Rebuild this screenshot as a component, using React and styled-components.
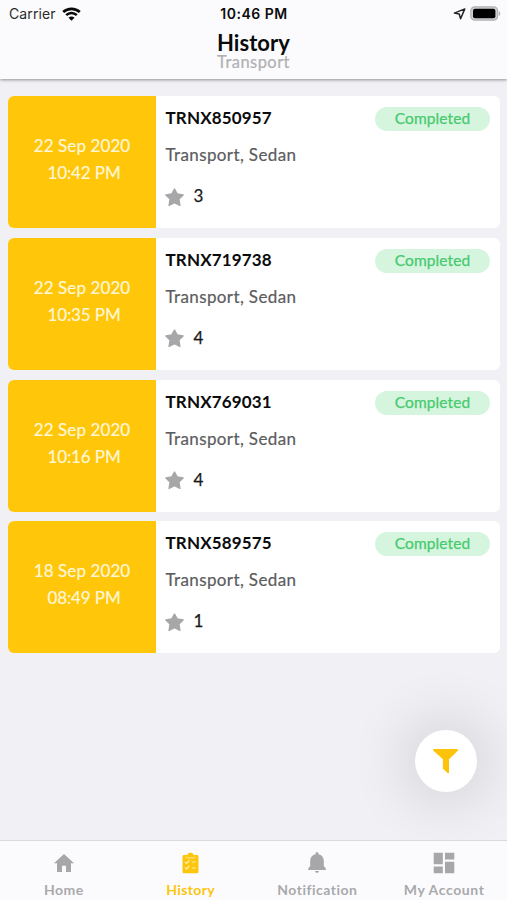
import React from "react";
import styled, { createGlobalStyle } from "styled-components";

const GlobalStyle = createGlobalStyle`
  *, *::before, *::after { box-sizing: border-box; }
  body { margin: 0; background: #f0f0f5; }
`;

const Screen = styled.div`
  position: relative;
  display: flex;
  flex-direction: column;
  width: 507px;
  height: 900px;
  overflow: hidden;
  background: #f0f0f5;
  font-family: Lato, "Open Sans", sans-serif;
  color: #0b0b0c;
  white-space: nowrap;
`;

const Header = styled.header`
  flex: none;
  height: 79px;
  background: #fbfbfd;
  box-shadow: 0 1px 3px rgba(0, 0, 0, 0.4);
`;

const StatusBar = styled.div`
  display: grid;
  grid-template-columns: 1fr auto 1fr;
  align-items: center;
  height: 27px;
  padding: 0 6px 0 9px;
  font-family: Inter, sans-serif;
  font-size: 14px;
  line-height: 27px;
`;

const Carrier = styled.div`
  display: flex;
  align-items: center;
  gap: 6px;
  color: #2a2a2c;
  letter-spacing: 0.12px;
`;

const Clock = styled.div`
  margin: 0 1px 0 -1px;
  font-weight: 600;
  letter-spacing: 0.5px;
`;

const StatusIcons = styled.div`
  display: flex;
  align-items: center;
  justify-content: flex-end;
  gap: 4px;
`;

const Title = styled.h1`
  margin: 6px 0 0;
  text-align: center;
  font-size: 22px;
  font-weight: 700;
  line-height: 20px;
  letter-spacing: 0.05px;
`;

const Subtitle = styled.p`
  margin: 0;
  text-align: center;
  font-size: 16.5px;
  line-height: 18px;
  letter-spacing: 0.45px;
  color: #b0b0b3;
  -webkit-text-stroke: 0.2px currentColor;
`;

const List = styled.main`
  flex: 1;
  display: flex;
  flex-direction: column;
  gap: 9.75px;
  padding: 17px 7px 0 8px;
`;

const Card = styled.article`
  flex: none;
  display: flex;
  height: 132px;
  border-radius: 6px;
  overflow: hidden;
  background: #fff;
`;

const DatePanel = styled.div`
  flex: none;
  display: flex;
  flex-direction: column;
  align-items: center;
  width: 148px;
  padding-top: 36px;
  background: #ffc60a;
  color: #fff7d8;
  font-size: 17px;
  line-height: 27px;
  -webkit-text-stroke: 0.2px currentColor;
`;

const DateLine = styled.span`
  letter-spacing: 0.1px;
`;

const TimeLine = styled.span`
  padding-left: 4px;
  letter-spacing: -0.1px;
`;

const Details = styled.div`
  flex: 1;
  padding: 11px 10px 0 9.5px;
`;

const TopRow = styled.div`
  display: flex;
  justify-content: space-between;
  align-items: flex-start;
  height: 25px;
`;

const Reference = styled.strong`
  font-size: 17px;
  font-weight: 700;
  line-height: 22px;
  letter-spacing: 0.15px;
`;

const Status = styled.span`
  width: 115px;
  height: 24px;
  border-radius: 12px;
  background: #d6f5df;
  color: #46ca6e;
  text-align: center;
  font-size: 15.5px;
  line-height: 22px;
  letter-spacing: 0.1px;
  -webkit-text-stroke: 0.25px currentColor;
`;

const Service = styled.div`
  margin-top: 12px;
  font-size: 17px;
  line-height: 22px;
  letter-spacing: 0.38px;
  color: #5c5c5e;
  -webkit-text-stroke: 0.2px currentColor;
`;

const Rating = styled.div`
  display: flex;
  align-items: center;
  gap: 9.5px;
  margin-top: 19px;
  font-size: 17px;
  line-height: 22px;
  color: #19191a;
  -webkit-text-stroke: 0.25px currentColor;

  svg {
    margin: 2px 0 0 -0.5px;
  }
`;

const FilterButton = styled.button`
  position: absolute;
  left: 415px;
  top: 730px;
  display: grid;
  place-items: center;
  width: 62px;
  height: 62px;
  padding: 0;
  border: 0;
  border-radius: 50%;
  background: #fff;
  box-shadow: 0 0 56px 14px rgba(0, 0, 0, 0.11);
`;

const TabBar = styled.nav`
  position: relative;
  flex: none;
  display: grid;
  grid-template-columns: repeat(4, 1fr);
  height: 60px;
  border-top: 1px solid #d9d9dd;
  background: #fbfbfd;
`;

const Tab = styled.a`
  display: flex;
  flex-direction: column;
  align-items: center;
  padding: 11px 0 0 1px;
  color: ${(p) => (p.$active ? "#fdc50c" : "#a9a9ab")};
  font-size: 14px;
  font-weight: 700;
  line-height: 18px;
  letter-spacing: ${(p) => p.$spacing}px;

  svg { margin-bottom: 7px; }
`;

const WifiIcon = () => (
  <svg width="19" height="14" viewBox="0 0 19 14" fill="none" stroke="#09090a">
    <path d="M1.2 5.1C5.8.7 13.2.7 17.8 5.1" strokeWidth="2.7" />
    <path d="M4.2 8.2c2.9-2.9 7.7-2.9 10.6 0" strokeWidth="2.5" />
    <path d="M9.5 13.8 6.5 10.8c1.7-1.7 4.3-1.7 6 0z" fill="#09090a" stroke="none" />
  </svg>
);

const LocationIcon = () => (
  <svg width="13" height="12" viewBox="0 0 13 12" fill="none" stroke="#242426" strokeWidth="1.5" strokeLinejoin="round">
    <path d="M11.8.9 1.4 5.1l4.8.9 1.4 4.8z" />
  </svg>
);

const BatteryIcon = () => (
  <svg width="31" height="15" viewBox="0 0 31 15">
    <rect x=".8" y=".8" width="26.8" height="13.4" rx="4" fill="#cfcfd2" stroke="#b2b2b5" strokeWidth="1.2" />
    <rect x="3" y="2.8" width="22.4" height="9.4" rx="2" fill="#000" />
    <path d="M28.8 5c2 .8 2 4.2 0 5z" fill="#b2b2b5" />
  </svg>
);

const StarIcon = () => (
  <svg width="19" height="19" viewBox="0 0 19 19" fill="#a7a7a9" stroke="#a7a7a9" strokeWidth="1.4" strokeLinejoin="round">
    <path d="m9.5 1 2.8 5 5.8.9-4.2 4.2 1 6.3-5.4-2.7-5.4 2.7 1-6.3L.9 6.9 6.7 6z" />
  </svg>
);

const FilterIcon = () => (
  <svg width="26" height="26" viewBox="0 0 26 26" fill="#fdc30b">
    <path d="M1.1 1h22.8c1 0 1.4 1 .8 1.7L16 11.2v13.1c0 1-.9 1.3-1.5.8l-4.2-4c-.3-.3-.4-.5-.4-.9v-9L.4 2.7C-.2 2 .2 1 1.1 1z" />
  </svg>
);

const HomeIcon = () => (
  <svg width="22" height="22" viewBox="0 0 22 22" fill="#a7a7a9">
    <path d="M11 2 .9 11.2H4V20h5v-6.3h4V20h5v-8.8h3.1z" />
  </svg>
);

const ClipboardIcon = () => (
  <svg width="17" height="22" viewBox="0 0 17 22">
    <path d="M2 3h3.2a3.4 3.4 0 0 1 6.6 0H15c.9 0 1.5.7 1.5 1.5v15.2c0 .9-.6 1.5-1.5 1.5H2c-.9 0-1.5-.6-1.5-1.5V4.5C.5 3.7 1.1 3 2 3z" fill="#fdc50c" />
    <path d="M4 4.6c0 .9.4 1.3 1.2 1.3h6.6c.8 0 1.2-.4 1.2-1.3" fill="none" stroke="#fff0b9" strokeWidth=".8" />
    <path d="m3.1 10 1.4 1.4L7.4 8.5m-4.3 7 1.4 1.4L7.4 14M10.3 10h3.4m-3.4 6h3.4" fill="none" stroke="#fff3c4" strokeWidth="1.2" />
  </svg>
);

const BellIcon = () => (
  <svg width="20" height="22" viewBox="0 0 20 22" fill="#a7a7a9">
    <path d="M8.5 2.2V1.5c0-.8.7-1.2 1.5-1.2s1.5.4 1.5 1.2v.7c3.3.7 5.3 3.2 5.3 6.4v5.3l2 2.7v1.3H1.2v-1.3l2-2.7V8.6c0-3.2 2-5.7 5.3-6.4zM8 19h4c0 1.1-.9 1.8-2 1.8S8 20.100 8 19z" />
  </svg>
);

const DashboardIcon = () => (
  <svg width="22" height="22" viewBox="0 0 22 22" fill="#a7a7a9">
    <path d="M.7.7h9.1v11.5H.7zM12 .7h9.3v6.9H12zM.7 14.5h9.1v6.8H.7zM12 9.8h9.3v11.5H12z" />
  </svg>
);

const trips = [
  { id: "TRNX850957", date: "22 Sep 2020", time: "10:42 PM", rating: 3 },
  { id: "TRNX719738", date: "22 Sep 2020", time: "10:35 PM", rating: 4 },
  { id: "TRNX769031", date: "22 Sep 2020", time: "10:16 PM", rating: 4 },
  { id: "TRNX589575", date: "18 Sep 2020", time: "08:49 PM", rating: 1 },
];

const tabs = [
  { label: "Home", Icon: HomeIcon, spacing: 0.5 },
  { label: "History", Icon: ClipboardIcon, active: true, spacing: 0.35 },
  { label: "Notification", Icon: BellIcon, spacing: 0.5 },
  { label: "My Account", Icon: DashboardIcon, spacing: 0.6 },
];

export default function App() {
  return (
    <Screen>
      <GlobalStyle />
      <Header>
        <StatusBar>
          <Carrier>Carrier <WifiIcon /></Carrier>
          <Clock>10:46 PM</Clock>
          <StatusIcons><LocationIcon /><BatteryIcon /></StatusIcons>
        </StatusBar>
        <Title>History</Title>
        <Subtitle>Transport</Subtitle>
      </Header>
      <List>
        {trips.map((trip) => (
          <Card key={trip.id}>
            <DatePanel>
              <DateLine>{trip.date}</DateLine>
              <TimeLine>{trip.time}</TimeLine>
            </DatePanel>
            <Details>
              <TopRow>
                <Reference>{trip.id}</Reference>
                <Status>Completed</Status>
              </TopRow>
              <Service>Transport, Sedan</Service>
              <Rating><StarIcon />{trip.rating}</Rating>
            </Details>
          </Card>
        ))}
      </List>
      <FilterButton aria-label="Filter"><FilterIcon /></FilterButton>
      <TabBar>
        {tabs.map(({ label, Icon, active, spacing }) => (
          <Tab key={label} $active={active} $spacing={spacing}><Icon />{label}</Tab>
        ))}
      </TabBar>
    </Screen>
  );
}
